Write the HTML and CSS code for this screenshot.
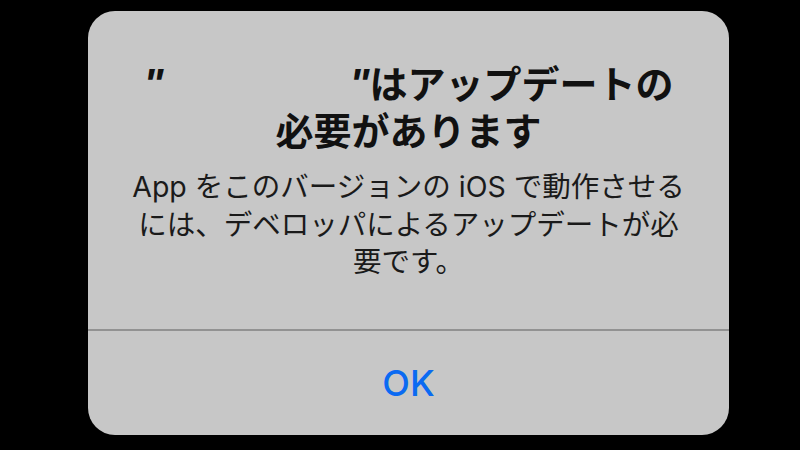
FILE: index.html
```html
<!DOCTYPE html>
<html lang="ja">
<head>
  <meta charset="UTF-8" />
  <meta name="viewport" content="width=device-width, initial-scale=1.0"/>
  <title>アップデートが必要です</title>
  <link rel="stylesheet" href="styles.css">
</head>
<body>
  <div class="alert">
    <div class="alert-body">
      <h1 class="alert-title">
        <span class="q">"</span><span class="app-name"></span><span class="q">"</span>はアップデートの<br>必要があります
      </h1>
      <p class="alert-message">
        App をこのバージョンの iOS で動作させる<br>には、デベロッパによるアップデートが必<br>要です。
      </p>
    </div>
    <button class="alert-button">OK</button>
  </div>
</body>
</html>
```

FILE: styles.css
```css
body {
  margin: 0;
  background: #000;
  font-family: "Inter", "Noto Sans CJK JP", sans-serif;
}
.alert {
  width: 641px;
  height: 424px;
  margin: 11px 0 0 88px;
  background: #c7c7c7;
  border-radius: 27px;
  display: flex;
  flex-direction: column;
  overflow: hidden;
}
.alert-body {
  height: 320px;
  box-sizing: border-box;
  padding-top: 49px;
  border-bottom: 2px solid #929292;
  text-align: center;
}
.alert-title {
  margin: 0;
  font-size: 38px;
  line-height: 47px;
  font-weight: 700;
  color: #111;
}
.q {
  display: inline-block;
  font-family: "Liberation Sans", sans-serif;
  font-style: italic;
  font-size: 42px;
}
.app-name {
  display: inline-block;
  width: 186px;
}
.alert-message {
  margin: 13px 0 0;
  font-size: 28.5px;
  line-height: 37.5px;
  color: #1a1a1a;
}
.alert-button {
  flex: 1;
  border: none;
  background: none;
  font-family: "Inter", sans-serif;
  font-size: 36px;
  font-weight: 500;
  color: #0a6af2;
  padding: 0;
}
```
